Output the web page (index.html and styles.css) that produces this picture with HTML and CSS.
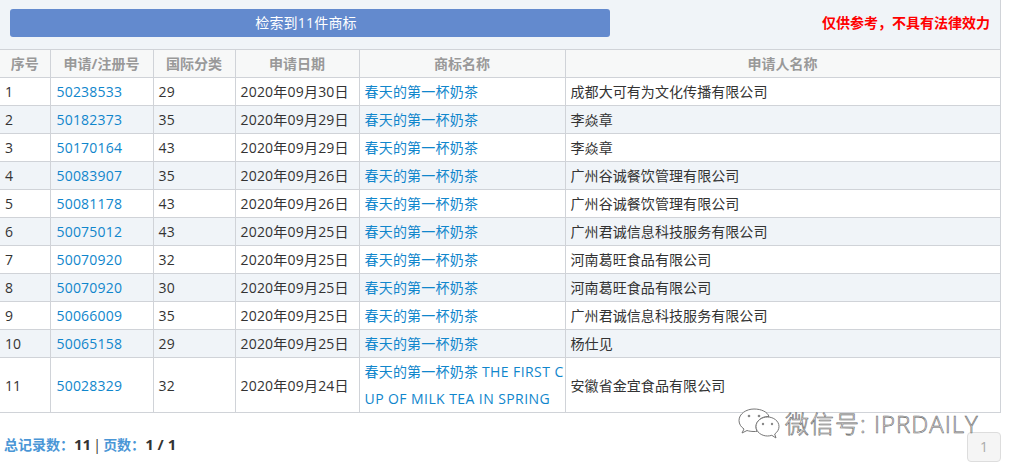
FILE: index.html
```html
<!DOCTYPE html>
<html lang="zh-CN">
<head>
<meta charset="utf-8">
<title>商标检索</title>
<link rel="stylesheet" href="styles.css">
</head>
<body>
<div class="page">
  <div class="top">
    <div class="banner">检索到11件商标</div>
    <div class="notice">仅供参考，不具有法律效力</div>
  </div>
  <table class="grid">
    <colgroup>
      <col class="c1"><col class="c2"><col class="c3"><col class="c4"><col class="c5"><col class="c6">
    </colgroup>
    <thead>
      <tr><th>序号</th><th>申请/注册号</th><th>国际分类</th><th>申请日期</th><th>商标名称</th><th>申请人名称</th></tr>
    </thead>
    <tbody>
      <tr><td>1</td><td><a>50238533</a></td><td>29</td><td>2020年09月30日</td><td><a>春天的第一杯奶茶</a></td><td>成都大可有为文化传播有限公司</td></tr>
      <tr><td>2</td><td><a>50182373</a></td><td>35</td><td>2020年09月29日</td><td><a>春天的第一杯奶茶</a></td><td>李焱章</td></tr>
      <tr><td>3</td><td><a>50170164</a></td><td>43</td><td>2020年09月29日</td><td><a>春天的第一杯奶茶</a></td><td>李焱章</td></tr>
      <tr><td>4</td><td><a>50083907</a></td><td>35</td><td>2020年09月26日</td><td><a>春天的第一杯奶茶</a></td><td>广州谷诚餐饮管理有限公司</td></tr>
      <tr><td>5</td><td><a>50081178</a></td><td>43</td><td>2020年09月26日</td><td><a>春天的第一杯奶茶</a></td><td>广州谷诚餐饮管理有限公司</td></tr>
      <tr><td>6</td><td><a>50075012</a></td><td>43</td><td>2020年09月25日</td><td><a>春天的第一杯奶茶</a></td><td>广州君诚信息科技服务有限公司</td></tr>
      <tr><td>7</td><td><a>50070920</a></td><td>32</td><td>2020年09月25日</td><td><a>春天的第一杯奶茶</a></td><td>河南葛旺食品有限公司</td></tr>
      <tr><td>8</td><td><a>50070920</a></td><td>30</td><td>2020年09月25日</td><td><a>春天的第一杯奶茶</a></td><td>河南葛旺食品有限公司</td></tr>
      <tr><td>9</td><td><a>50066009</a></td><td>35</td><td>2020年09月25日</td><td><a>春天的第一杯奶茶</a></td><td>广州君诚信息科技服务有限公司</td></tr>
      <tr><td>10</td><td><a>50065158</a></td><td>29</td><td>2020年09月25日</td><td><a>春天的第一杯奶茶</a></td><td>杨仕见</td></tr>
      <tr class="tall"><td>11</td><td><a>50028329</a></td><td>32</td><td>2020年09月24日</td><td class="name"><a>春天的第一杯奶茶 <span class="en">THE FIRST C<br>UP OF MILK TEA IN SPRING</span></a></td><td>安徽省金宜食品有限公司</td></tr>
    </tbody>
  </table>
  <div class="foot">
    <div class="summary"><span class="lbl">总记录数：</span><b>11</b> | <span class="lbl">页数：</span><b>1 / 1</b></div>
    <div class="pager">1</div>
  </div>
  <div class="mark">
    <svg class="mark-icon" width="42" height="32" viewBox="0 0 42 32" fill="#fff" stroke="#777" stroke-width="1">
      <path d="M16 1C8 1 1 6 1 12.500c0 3.500 2 6.500 5 8.500l-2 4 5-2.500c2 .6 4 1 7 1 1 0 2 0 3-.2-.6-1.500-1-3-1-4.300 0-6 5.500-10.500 12-10.500h1C29.500 4 23.500 1 16 1z"/>
      <path d="M41 18.500c0-5.500-5.500-9.500-11.500-9.500S18 13 18 18.500 23.500 28 29.500 28c1.500 0 3-.3 4.300-.7l4.200 2.700-1.300-4c2.600-1.800 4.300-4.500 4.300-7.500z"/>
      <circle cx="11" cy="8" r="1.300" fill="#888" stroke="none"/>
      <circle cx="21" cy="8" r="1.300" fill="#888" stroke="none"/>
      <circle cx="25" cy="16" r="1.200" fill="#888" stroke="none"/>
      <circle cx="34" cy="16" r="1.200" fill="#888" stroke="none"/>
    </svg>
    <span class="mark-text">微信号: IPRDAILY</span>
  </div>
</div>
</body>
</html>
```
FILE: styles.css
```css
* { box-sizing: border-box; }
html, body { margin: 0; padding: 0; background: #fff; }
body {
  font-family: "Open Sans", "Noto Sans CJK SC", sans-serif;
  font-size: 14px;
  color: #333;
}
.page { position: relative; width: 1010px; height: 470px; overflow: hidden; }
.top {
  width: 1001px;
  height: 49px;
  padding: 9px 10px 0 10px;
  display: flex;
  align-items: flex-start;
  justify-content: space-between;
  background: #f0f4f8;
  border-right: 1px solid #d0d3d8;
}
.banner {
  width: 600px;
  height: 28px;
  padding-right: 8px;
  line-height: 28px;
  text-align: center;
  color: #fff;
  font-size: 14px;
  letter-spacing: 0.2px;
  background: #638ace;
  border-radius: 3px;
}
.notice {
  line-height: 28px;
  font-size: 14px;
  font-weight: 700;
  color: #f00;
}
.grid {
  width: 1000px;
  table-layout: fixed;
  border-collapse: collapse;
}
.c1 { width: 50px; }
.c2 { width: 103px; }
.c3 { width: 82px; }
.c4 { width: 124px; }
.c5 { width: 206px; }
.c6 { width: 435px; }
.grid th, .grid td {
  border: 1px solid #d0d3d8;
  height: 28px;
  line-height: 27px;
}
.grid th { padding: 0 4px; }
.grid td { padding: 0 3px 0 5px; }
.grid th:first-child, .grid td:first-child { border-left: 0; }
.grid th {
  background: #f7f8f8;
  color: #999;
  font-weight: 700;
  text-align: center;
}
.grid tbody tr:nth-child(even) td { background: #f0f4f8; }
.grid td:nth-child(2) { padding-left: 6px; }
.grid td:nth-child(2), .grid td:nth-child(3), .grid td:nth-child(4), .grid td:nth-child(5) { letter-spacing: 0.2px; }
.grid td:nth-child(6) { letter-spacing: 0.07px; }
.grid a { color: #1086cc; }
.grid .name { white-space: nowrap; }
.grid .en { letter-spacing: 0.42px; }
.grid .tall td { height: 55px; line-height: 27px; }
.foot {
  display: flex;
  justify-content: space-between;
  align-items: flex-start;
  width: 1001px;
  padding: 19px 0 0 4px;
}
.summary {
  font-size: 14px;
  line-height: 25px;
  color: #333;
  word-spacing: -1.5px;
}
.summary b { font-size: 15px; word-spacing: 0; }
.lbl { color: #4a96d6; font-weight: 700; }
.pager {
  width: 34px;
  height: 30px;
  line-height: 28px;
  text-align: center;
  color: #aaa;
  background: #f5f5f5;
  border: 1px solid #ddd;
  border-radius: 4px;
}
.mark {
  position: absolute;
  left: 738px;
  top: 408px;
  display: flex;
  align-items: center;
  gap: 5px;
}
.mark-text {
  font-size: 24px;
  line-height: 32px;
  letter-spacing: 1px;
  font-weight: 300;
  color: #fff;
  -webkit-text-stroke: 0.6px #666;
}
```
